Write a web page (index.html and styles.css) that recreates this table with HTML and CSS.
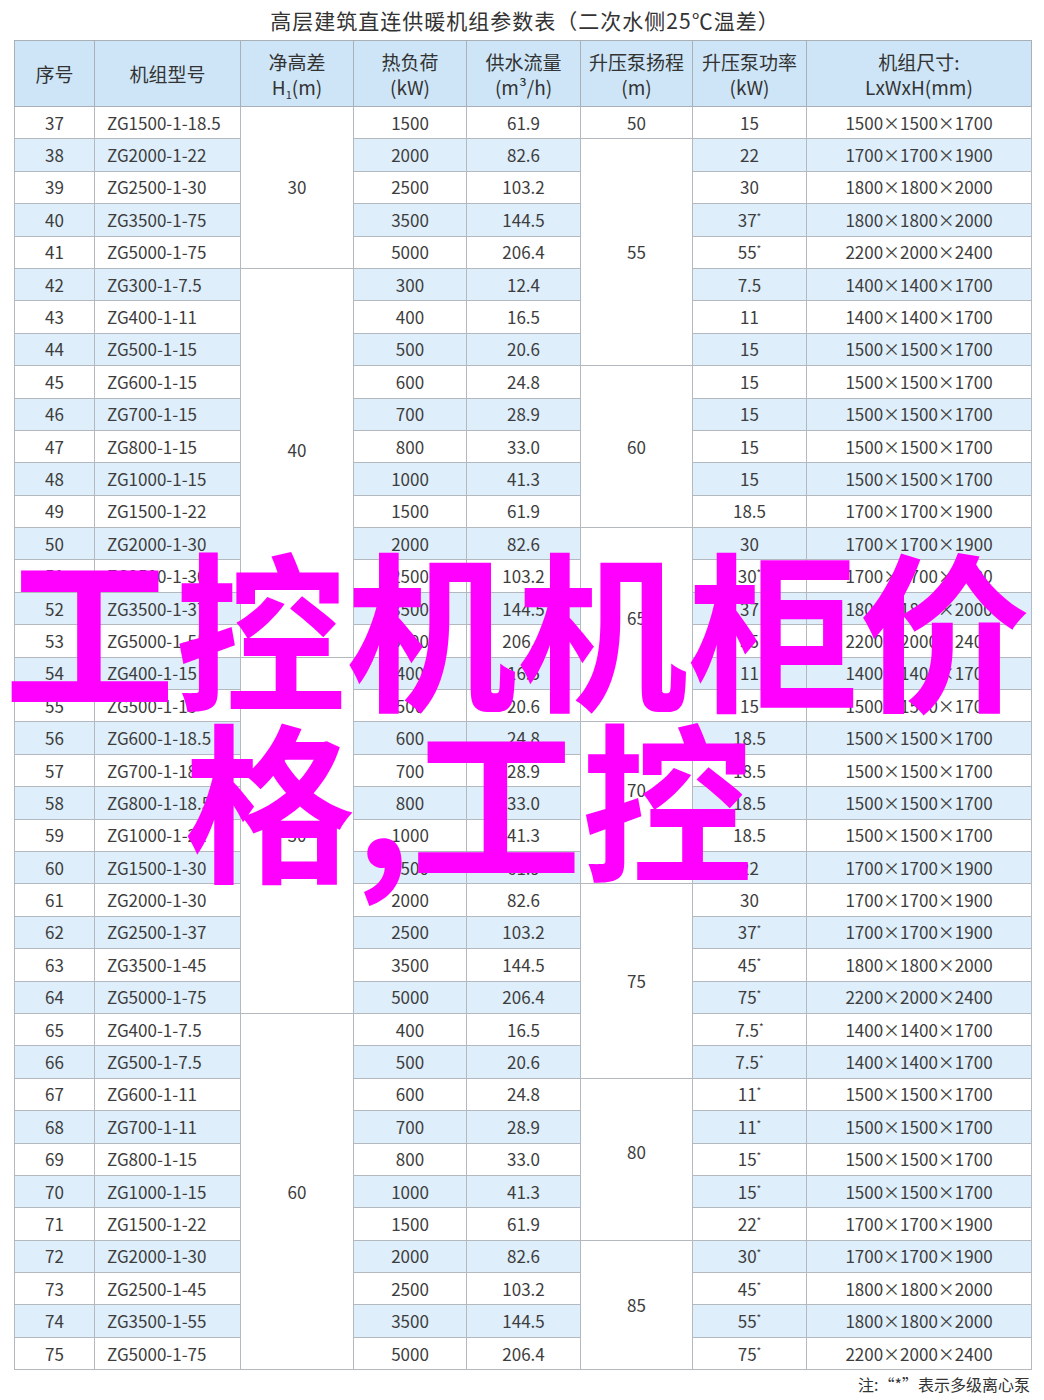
FILE: index.html
```html
<!DOCTYPE html>
<html lang="zh-CN">
<head>
<meta charset="utf-8">
<title>高层建筑直连供暖机组参数表</title>
<link rel="stylesheet" href="styles.css">
</head>
<body>
<div class="page">
  <h1 class="title">高层建筑直连供暖机组参数表（二次水侧25℃温差）</h1>
  <table class="spec">
    <colgroup>
      <col class="c-no"><col class="c-model"><col class="c-h"><col class="c-kw"><col class="c-flow"><col class="c-head"><col class="c-pw"><col class="c-dim">
    </colgroup>
    <thead>
      <tr>
        <th>序号</th>
        <th>机组型号</th>
        <th>净高差<br>H<sub>1</sub>(m)</th>
        <th>热负荷<br>(kW)</th>
        <th>供水流量<br>(m³/h)</th>
        <th>升压泵扬程<br>(m)</th>
        <th>升压泵功率<br>(kW)</th>
        <th>机组尺寸:<br>LxWxH(mm)</th>
      </tr>
    </thead>
    <tbody>
      <tr><td>37</td><td class="l">ZG1500-1-18.5</td><td class="m" rowspan="5">30</td><td>1500</td><td>61.9</td><td class="m">50</td><td>15</td><td>1500×1500×1700</td></tr>
      <tr class="b"><td>38</td><td class="l">ZG2000-1-22</td><td>2000</td><td>82.6</td><td class="m" rowspan="7">55</td><td>22</td><td>1700×1700×1900</td></tr>
      <tr><td>39</td><td class="l">ZG2500-1-30</td><td>2500</td><td>103.2</td><td>30</td><td>1800×1800×2000</td></tr>
      <tr class="b"><td>40</td><td class="l">ZG3500-1-75</td><td>3500</td><td>144.5</td><td>37<sup>*</sup></td><td>1800×1800×2000</td></tr>
      <tr><td>41</td><td class="l">ZG5000-1-75</td><td>5000</td><td>206.4</td><td>55<sup>*</sup></td><td>2200×2000×2400</td></tr>
      <tr class="b"><td>42</td><td class="l">ZG300-1-7.5</td><td class="m up" rowspan="12">40</td><td>300</td><td>12.4</td><td>7.5</td><td>1400×1400×1700</td></tr>
      <tr><td>43</td><td class="l">ZG400-1-11</td><td>400</td><td>16.5</td><td>11</td><td>1400×1400×1700</td></tr>
      <tr class="b"><td>44</td><td class="l">ZG500-1-15</td><td>500</td><td>20.6</td><td>15</td><td>1500×1500×1700</td></tr>
      <tr><td>45</td><td class="l">ZG600-1-15</td><td>600</td><td>24.8</td><td class="m" rowspan="5">60</td><td>15</td><td>1500×1500×1700</td></tr>
      <tr class="b"><td>46</td><td class="l">ZG700-1-15</td><td>700</td><td>28.9</td><td>15</td><td>1500×1500×1700</td></tr>
      <tr><td>47</td><td class="l">ZG800-1-15</td><td>800</td><td>33.0</td><td>15</td><td>1500×1500×1700</td></tr>
      <tr class="b"><td>48</td><td class="l">ZG1000-1-15</td><td>1000</td><td>41.3</td><td>15</td><td>1500×1500×1700</td></tr>
      <tr><td>49</td><td class="l">ZG1500-1-22</td><td>1500</td><td>61.9</td><td>18.5</td><td>1700×1700×1900</td></tr>
      <tr class="b"><td>50</td><td class="l">ZG2000-1-30</td><td>2000</td><td>82.6</td><td class="m up-s" rowspan="6">65</td><td>30</td><td>1700×1700×1900</td></tr>
      <tr><td>51</td><td class="l">ZG2500-1-30</td><td>2500</td><td>103.2</td><td>30<sup>*</sup></td><td>1700×1700×1900</td></tr>
      <tr class="b"><td>52</td><td class="l">ZG3500-1-37</td><td>3500</td><td>144.5</td><td>37</td><td>1800×1800×2000</td></tr>
      <tr><td>53</td><td class="l">ZG5000-1-55</td><td>5000</td><td>206.4</td><td>55</td><td>2200×2000×2400</td></tr>
      <tr class="b"><td>54</td><td class="l">ZG400-1-15</td><td class="m" rowspan="11">30</td><td>400</td><td>16.5</td><td>11</td><td>1400×1400×1700</td></tr>
      <tr><td>55</td><td class="l">ZG500-1-15</td><td>500</td><td>20.6</td><td>15</td><td>1500×1500×1700</td></tr>
      <tr class="b"><td>56</td><td class="l">ZG600-1-18.5</td><td>600</td><td>24.8</td><td class="m up" rowspan="5">70</td><td>18.5</td><td>1500×1500×1700</td></tr>
      <tr><td>57</td><td class="l">ZG700-1-18.5</td><td>700</td><td>28.9</td><td>18.5</td><td>1500×1500×1700</td></tr>
      <tr class="b"><td>58</td><td class="l">ZG800-1-18.5</td><td>800</td><td>33.0</td><td>18.5</td><td>1500×1500×1700</td></tr>
      <tr><td>59</td><td class="l">ZG1000-1-22</td><td>1000</td><td>41.3</td><td>18.5</td><td>1500×1500×1700</td></tr>
      <tr class="b"><td>60</td><td class="l">ZG1500-1-30</td><td>1500</td><td>61.9</td><td>22</td><td>1700×1700×1900</td></tr>
      <tr><td>61</td><td class="l">ZG2000-1-30</td><td>2000</td><td>82.6</td><td class="m" rowspan="6">75</td><td>30</td><td>1700×1700×1900</td></tr>
      <tr class="b"><td>62</td><td class="l">ZG2500-1-37</td><td>2500</td><td>103.2</td><td>37<sup>*</sup></td><td>1700×1700×1900</td></tr>
      <tr><td>63</td><td class="l">ZG3500-1-45</td><td>3500</td><td>144.5</td><td>45<sup>*</sup></td><td>1800×1800×2000</td></tr>
      <tr class="b"><td>64</td><td class="l">ZG5000-1-75</td><td>5000</td><td>206.4</td><td>75<sup>*</sup></td><td>2200×2000×2400</td></tr>
      <tr><td>65</td><td class="l">ZG400-1-7.5</td><td class="m" rowspan="11">60</td><td>400</td><td>16.5</td><td>7.5<sup>*</sup></td><td>1400×1400×1700</td></tr>
      <tr class="b"><td>66</td><td class="l">ZG500-1-7.5</td><td>500</td><td>20.6</td><td>7.5<sup>*</sup></td><td>1400×1400×1700</td></tr>
      <tr><td>67</td><td class="l">ZG600-1-11</td><td>600</td><td>24.8</td><td class="m up-s" rowspan="5">80</td><td>11<sup>*</sup></td><td>1500×1500×1700</td></tr>
      <tr class="b"><td>68</td><td class="l">ZG700-1-11</td><td>700</td><td>28.9</td><td>11<sup>*</sup></td><td>1500×1500×1700</td></tr>
      <tr><td>69</td><td class="l">ZG800-1-15</td><td>800</td><td>33.0</td><td>15<sup>*</sup></td><td>1500×1500×1700</td></tr>
      <tr class="b"><td>70</td><td class="l">ZG1000-1-15</td><td>1000</td><td>41.3</td><td>15<sup>*</sup></td><td>1500×1500×1700</td></tr>
      <tr><td>71</td><td class="l">ZG1500-1-22</td><td>1500</td><td>61.9</td><td>22<sup>*</sup></td><td>1700×1700×1900</td></tr>
      <tr class="b"><td>72</td><td class="l">ZG2000-1-30</td><td>2000</td><td>82.6</td><td class="m" rowspan="4">85</td><td>30<sup>*</sup></td><td>1700×1700×1900</td></tr>
      <tr><td>73</td><td class="l">ZG2500-1-45</td><td>2500</td><td>103.2</td><td>45<sup>*</sup></td><td>1800×1800×2000</td></tr>
      <tr class="b"><td>74</td><td class="l">ZG3500-1-55</td><td>3500</td><td>144.5</td><td>55<sup>*</sup></td><td>1800×1800×2000</td></tr>
      <tr><td>75</td><td class="l">ZG5000-1-75</td><td>5000</td><td>206.4</td><td>75<sup>*</sup></td><td>2200×2000×2400</td></tr>
    </tbody>
  </table>
  <p class="note">注:“*”表示多级离心泵</p>
  <div class="overlay">
    <div class="ov-line">工控机机柜价</div>
    <div class="ov-line ov-second">格,工控</div>
  </div>
</div>
</body>
</html>
```
FILE: styles.css
```css
html, body {
  margin: 0;
  padding: 0;
  background: #ffffff;
}
.page {
  position: relative;
  width: 1044px;
  height: 1400px;
  overflow: hidden;
  font-family: "Noto Sans CJK SC", "Noto Sans", sans-serif;
  color: #3a3a3a;
}
.title {
  margin: 0;
  height: 40px;
  line-height: 40px;
  font-size: 21px;
  letter-spacing: 1px;
  font-weight: 400;
  text-align: center;
  color: #333;
  padding-left: 6px;
}
.spec {
  margin-left: 14px;
  border-collapse: collapse;
  table-layout: fixed;
  width: 1017px;
  border: 1px solid #a9b0b7;
}
.c-no { width: 80px; }
.c-model { width: 146px; }
.c-h { width: 113px; }
.c-kw { width: 113px; }
.c-flow { width: 114px; }
.c-head { width: 112px; }
.c-pw { width: 114px; }
.c-dim { width: 225px; }
.spec th {
  height: 65px;
  padding: 0;
  background: #cde5f6;
  border: 1px solid #a9b0b7;
  font-size: 19px;
  font-weight: 400;
  line-height: 25px;
  color: #333;
  text-align: center;
  vertical-align: middle;
}
.spec th sub {
  font-size: 11px;
  vertical-align: -4px;
  line-height: 0;
}
.spec td {
  height: 31.4px;
  padding: 0;
  border: 1px solid #b3b9bf;
  font-size: 17px;
  line-height: 20px;
  text-align: center;
  vertical-align: middle;
  color: #3d3d3d;
  background: #ffffff;
  white-space: nowrap;
}
.spec tr.b td {
  background: #deeefa;
}
.spec tr td.m {
  background: #ffffff;
}
.spec td.up {
  padding-bottom: 26px;
}
.spec td.up-s {
  padding-bottom: 14px;
}
.spec td.l {
  text-align: left;
  padding-left: 12px;
}
.spec sup {
  font-size: 10px;
  line-height: 0;
  vertical-align: 6px;
}
.note {
  margin: 4px 14px 0 0;
  line-height: 20px;
  text-align: right;
  font-size: 16px;
  color: #333;
}
.overlay {
  position: absolute;
  left: 4px;
  top: 538px;
  font-family: "Noto Sans CJK SC", sans-serif;
  font-weight: 700;
  font-size: 171px;
  line-height: 171px;
  color: #ff00ff;
  white-space: nowrap;
  pointer-events: none;
}
.ov-second {
  padding-left: 180px;
}
```
